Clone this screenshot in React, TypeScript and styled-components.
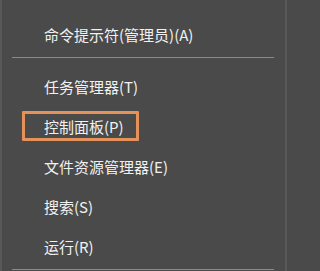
import React from "react";
import styled, { createGlobalStyle } from "styled-components";

const GlobalStyle = createGlobalStyle`
  html, body {
    margin: 0;
    padding: 0;
    background: #4a4a4a;
    overflow: hidden;
  }
`;

const Menu = styled.div`
  width: 287px;
  height: 271px;
  box-sizing: border-box;
  background: #4a4a4a;
  border-left: 2px solid #585858;
  border-right: 2px solid #585858;
  overflow: hidden;
  font-family: "Noto Sans CJK SC", "Microsoft YaHei", sans-serif;
  display: flex;
  flex-direction: column;
`;

const Item = styled.div<{ $marked?: boolean; $first?: boolean }>`
  position: relative;
  flex: 0 0 40px;
  display: flex;
  align-items: center;
  padding-left: 42px;
  margin-top: ${(p) => (p.$first ? "-31px" : "0")};
  margin-bottom: ${(p) => (p.$first ? "5px" : "0")};
  color: #f1f1f1;
  font-size: 15px;
  line-height: 1;
  white-space: nowrap;

  &::before {
    content: "";
    display: ${(p) => (p.$marked ? "block" : "none")};
    position: absolute;
    left: 20px;
    top: 5px;
    width: 117px;
    height: 30px;
    box-sizing: border-box;
    border: 3px solid #e5925a;
    border-radius: 1px;
  }
`;

const Separator = styled.div`
  flex: 0 0 12px;
  padding: 3px 11px 0 10px;
  box-sizing: border-box;

  &::after {
    content: "";
    display: block;
    height: 1px;
    background: #8a8a8a;
  }
`;

type Entry = { label: string; marked?: boolean } | "sep";

const entries: Entry[] = [
  { label: "命令提示符(C)" },
  { label: "命令提示符(管理员)(A)" },
  "sep",
  { label: "任务管理器(T)" },
  { label: "控制面板(P)", marked: true },
  { label: "文件资源管理器(E)" },
  { label: "搜索(S)" },
  { label: "运行(R)" },
  "sep",
];

export default function App() {
  return (
    <>
      <GlobalStyle />
      <Menu>
        {entries.map((e, i) =>
          e === "sep" ? (
            <Separator key={i} />
          ) : (
            <Item key={i} $first={i === 0} $marked={e.marked}>
              {e.label}
            </Item>
          )
        )}
      </Menu>
    </>
  );
}
